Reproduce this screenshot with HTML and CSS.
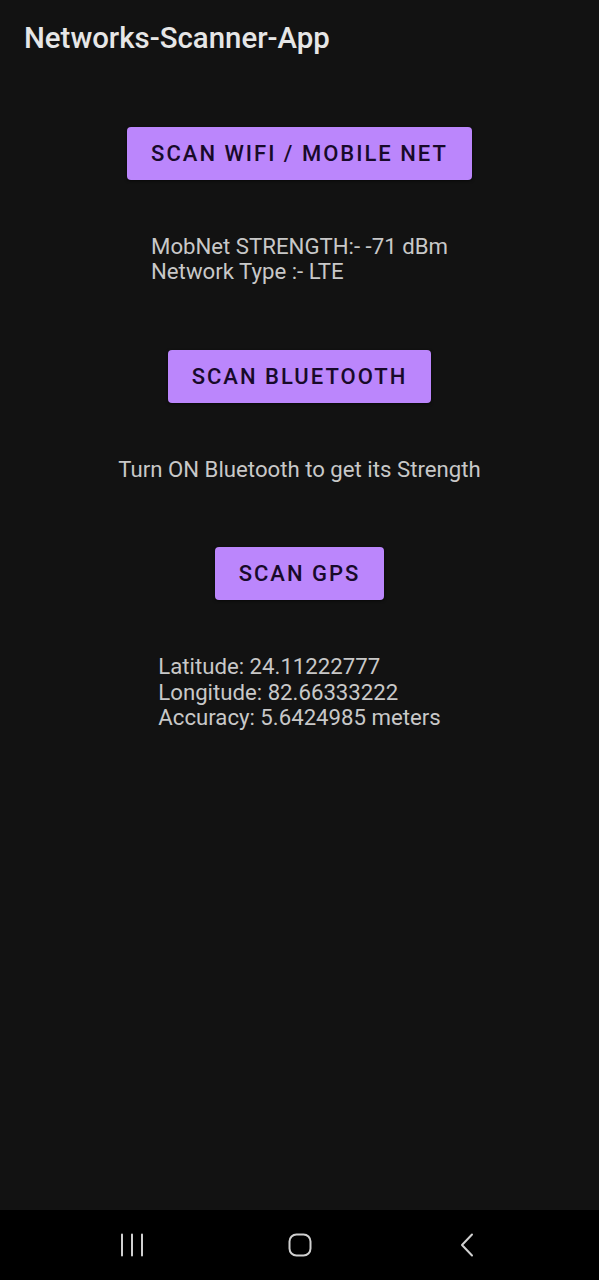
FILE: index.html
```html
<!DOCTYPE html>
<html>
<head>
<meta charset="utf-8">
<link rel="stylesheet" href="styles.css">
</head>
<body>
<div class="screen">
  <header class="appbar"><h1 class="title">Networks-Scanner-App</h1></header>
  <main class="content">
    <button class="btn">SCAN WIFI / MOBILE NET</button>
    <div class="info gap-after">MobNet STRENGTH:- -71 dBm<br>Network Type :- LTE</div>
    <button class="btn">SCAN BLUETOOTH</button>
    <div class="info gap-after">Turn ON Bluetooth to get its Strength</div>
    <button class="btn">SCAN GPS</button>
    <div class="info">Latitude: 24.11222777<br>Longitude: 82.66333222<br>Accuracy: 5.6424985 meters</div>
  </main>
  <nav class="navbar">
    <div class="nav-slot"><svg width="24" height="24" viewBox="0 0 24 24"><path d="M2 1.5V22.5M12 1.5V22.5M22 1.5V22.5" stroke="#d0d0d0" stroke-width="2" fill="none" stroke-linecap="round"/></svg></div>
    <div class="nav-slot"><svg width="24" height="24" viewBox="0 0 24 24"><rect x="1.5" y="1.5" width="21" height="21" rx="7" stroke="#d0d0d0" stroke-width="2" fill="none"/></svg></div>
    <div class="nav-slot"><svg width="16" height="24" viewBox="0 0 16 24"><path d="M13 1.5L3 12L13 22.5" stroke="#d0d0d0" stroke-width="2" fill="none" stroke-linecap="round" stroke-linejoin="round"/></svg></div>
  </nav>
</div>
</body>
</html>
```
FILE: styles.css
```css
html, body {
  margin: 0;
  padding: 0;
  background: #121212;
}
.screen {
  width: 599px;
  height: 1280px;
  display: flex;
  flex-direction: column;
  background: #121212;
  font-family: Roboto, "Noto Sans", sans-serif;
}
.appbar {
  height: 78px;
  display: flex;
  align-items: center;
  padding-left: 24px;
  box-sizing: border-box;
}
.title {
  margin: 0;
  font-size: 29.4px;
  font-weight: 500;
  color: #e6e6e6;
  line-height: 1;
}
.content {
  flex: 1;
  display: flex;
  flex-direction: column;
  align-items: center;
  padding-top: 49px;
}
.btn {
  height: 53px;
  padding: 0 24px;
  border: none;
  border-radius: 4px;
  background: #bb86fc;
  color: #180a2a;
  font-family: Roboto, sans-serif;
  font-weight: 500;
  font-size: 22px;
  letter-spacing: 2px;
  box-shadow: 0 1px 3px rgba(0,0,0,0.6);
  margin-bottom: 53.5px;
}
.info {
  font-size: 22.2px;
  line-height: 25.8px;
  color: #c8c8c8;
  text-align: left;
}
.gap-after {
  margin-bottom: 65px;
}
.navbar {
  height: 70px;
  background: #000;
  display: flex;
  align-items: center;
  justify-content: center;
  gap: 127.5px;
}
.nav-slot {
  width: 40px;
  display: flex;
  justify-content: center;
}
.nav-slot svg {
  display: block;
}
```
